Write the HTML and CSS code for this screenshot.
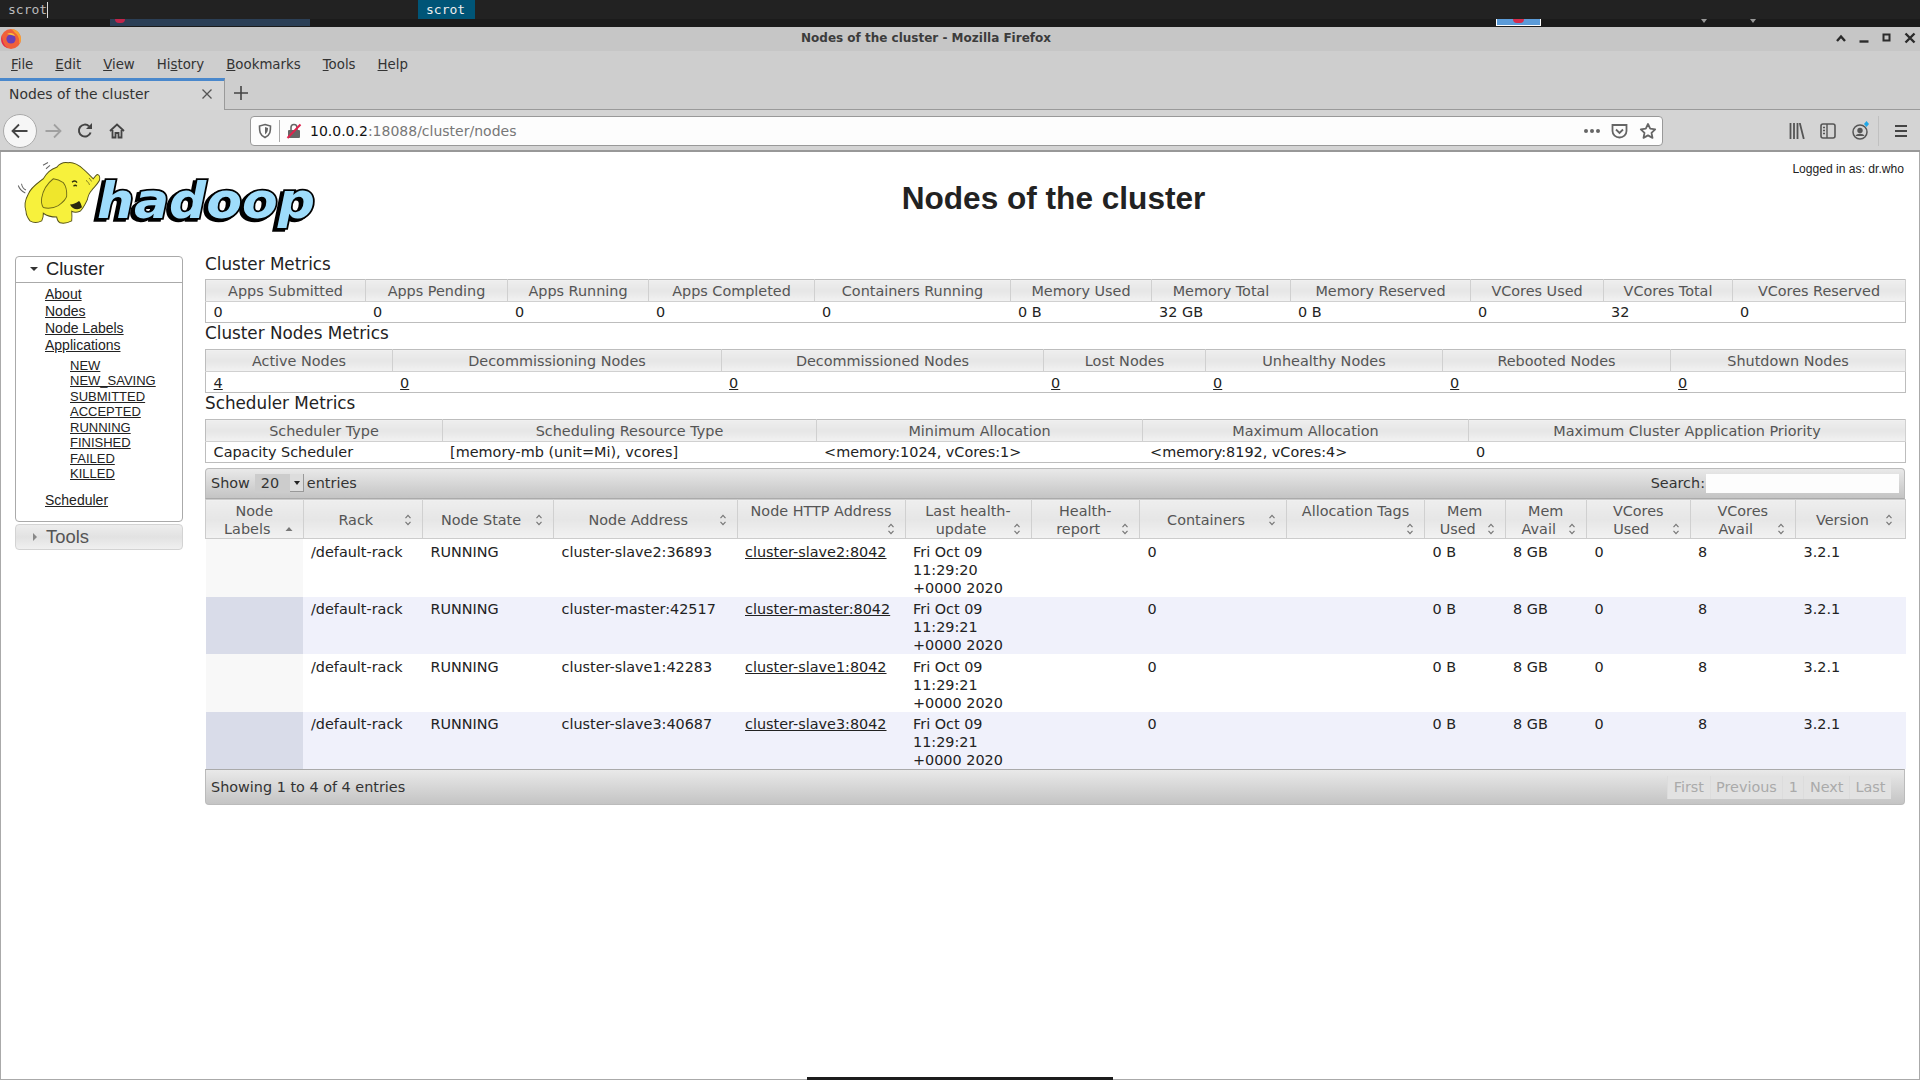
FILE: index.html
```html
<!DOCTYPE html>
<html lang="en">
<head>
<meta charset="utf-8">
<title>Nodes of the cluster</title>
<link rel="stylesheet" href="styles.css">
</head>
<body>
<svg class="defs" width="0" height="0" aria-hidden="true">
  <defs>
    <g id="sort"><path d="M1.5 4.2 4 1.4 6.5 4.2M1.5 7.8 4 10.6 6.5 7.8" fill="none" stroke="#777" stroke-width="1.2"/></g>
  </defs>
</svg>
<div class="screen">
  <div class="launcher">
    <span class="prompt">scrot<i class="caret"></i></span>
    <span class="match">scrot</span>
  </div>
  <div class="strip">
    <span class="strip-task"><i class="strip-dot"></i></span>
    <span class="strip-thumb"><i class="strip-red"></i></span>
    <span class="strip-arrow a1"></span>
    <span class="strip-arrow a2"></span>
  </div>
  <div class="titlebar">
    <svg class="fxlogo" width="22" height="22" viewBox="0 0 22 22">
      <circle cx="11" cy="12" r="10" fill="#f0603a"/>
      <path d="M11 2c5 0 10 4 10 10 0 2-1 4-2 5 1-5-1-9-4-11-1-1-2-3-4-4z" fill="#f9a12e"/>
      <path d="M2 8c-2 5 0 12 6 13-4-2-6-7-6-13z" fill="#e0284f"/>
      <circle cx="11" cy="12" r="4.6" fill="#6a3fb5"/>
      <path d="M7 7c3-2 7-1 8 2-2-1-5-1-8-2z" fill="#f9c23c"/>
    </svg>
    <span class="wintitle">Nodes of the cluster - Mozilla Firefox</span>
    <div class="winbtns">
      <svg width="12" height="10" viewBox="0 0 12 10"><path d="M2 8 6 3.5 10 8" fill="none" stroke="#2b2b2b" stroke-width="2.4"/></svg>
      <svg width="12" height="10" viewBox="0 0 12 10"><path d="M1.5 8.5h9" stroke="#2b2b2b" stroke-width="2.4"/></svg>
      <svg width="12" height="10" viewBox="0 0 12 10"><rect x="2.5" y="1.5" width="6" height="6" fill="none" stroke="#2b2b2b" stroke-width="2"/></svg>
      <svg width="12" height="12" viewBox="0 0 12 12"><path d="M1.5 1.5 10.5 10.5M10.5 1.5 1.5 10.5" stroke="#2b2b2b" stroke-width="2.4"/></svg>
    </div>
  </div>
  <div class="menubar">
    <span class="menu"><u>F</u>ile</span>
    <span class="menu"><u>E</u>dit</span>
    <span class="menu"><u>V</u>iew</span>
    <span class="menu">Hi<u>s</u>tory</span>
    <span class="menu"><u>B</u>ookmarks</span>
    <span class="menu"><u>T</u>ools</span>
    <span class="menu"><u>H</u>elp</span>
  </div>
  <div class="tabbar">
    <div class="tab">
      <span class="tab-title">Nodes of the cluster</span>
      <svg width="12" height="12" viewBox="0 0 12 12"><path d="M1.5 1.5 10.5 10.5M10.5 1.5 1.5 10.5" stroke="#555" stroke-width="1.3"/></svg>
    </div>
    <svg class="newtab" width="14" height="14" viewBox="0 0 14 14"><path d="M7 0v14M0 7h14" stroke="#444" stroke-width="1.6"/></svg>
  </div>
  <div class="navbar">
    <span class="backbtn">
      <svg width="18" height="16" viewBox="0 0 18 16"><path d="M1.5 8h15M8 1.5 1.5 8 8 14.5" fill="none" stroke="#444" stroke-width="1.8"/></svg>
    </span>
    <svg class="nav-fwd" width="18" height="16" viewBox="0 0 18 16"><path d="M1.5 8h15M10 1.5 16.5 8 10 14.5" fill="none" stroke="#a0a0a0" stroke-width="1.8"/></svg>
    <svg class="nav-reload" width="16" height="16" viewBox="0 0 16 16"><path d="M13.6 9.5A6 6 0 1 1 12 3.2" fill="none" stroke="#444" stroke-width="2"/><path d="M9 6h6V0z" fill="#444"/></svg>
    <svg class="nav-home" width="16" height="16" viewBox="0 0 16 16"><path d="M1 8 8 1.5 15 8M3.5 7v7.5h3V10h3v4.500h3V7" fill="none" stroke="#444" stroke-width="1.8"/></svg>
    <div class="urlbar">
      <svg class="url-shield" width="14" height="16" viewBox="0 0 14 16"><path d="M7 1.500 12.500 3c0 5 0 9-5.500 11.500C1.500 12 1.500 8 1.500 3z" fill="none" stroke="#666" stroke-width="1.600"/><path d="M7 4v7.500c2-1.500 3-3 3-6.500z" fill="#666"/></svg>
      <span class="url-sep"></span>
      <svg class="url-lock" width="16" height="16" viewBox="0 0 16 16"><rect x="2" y="7" width="12" height="8" rx="1" fill="#666"/><path d="M5 7V4.500a3 3 0 0 1 6 0V7" fill="none" stroke="#666" stroke-width="1.600"/><path d="M1.500 15 14.500 1.500" stroke="#e0234e" stroke-width="2"/></svg>
      <span class="url-text"><b>10.0.0.2</b>:18088/cluster/nodes</span>
      <span class="url-dots"><i></i><i></i><i></i></span>
      <svg class="url-pocket" width="17" height="16" viewBox="0 0 17 16"><path d="M1.500 2h14v6a7 6.500 0 0 1-14 0z" fill="none" stroke="#666" stroke-width="1.800"/><path d="M5 6.500 8.500 10 12 6.500" fill="none" stroke="#666" stroke-width="1.800"/></svg>
      <svg class="url-star" width="18" height="18" viewBox="0 0 18 18"><path d="M9 2l2.200 4.700 5 .6-3.700 3.500 1 5.100L9 13.400l-4.500 2.500 1-5.100L1.800 7.300l5-.6z" fill="none" stroke="#666" stroke-width="1.800" stroke-linejoin="round"/></svg>
    </div>
    <svg class="tool-lib" width="16" height="16" viewBox="0 0 16 16"><path d="M1.500 0v16M5 0v16M8.500 0v16M10.800 0l4 16" fill="none" stroke="#555" stroke-width="1.800"/></svg>
    <svg class="tool-side" width="16" height="16" viewBox="0 0 16 16"><rect x="1" y="1" width="14" height="14" rx="2" fill="none" stroke="#555" stroke-width="1.600"/><path d="M7 1v14M3 4.500h2M3 7.500h2M3 10.500h2" stroke="#555" stroke-width="1.400"/></svg>
    <svg class="tool-acct" width="20" height="20" viewBox="0 0 20 20"><circle cx="9" cy="11" r="7" fill="none" stroke="#555" stroke-width="1.500"/><circle cx="9" cy="9.500" r="2.700" fill="#555"/><path d="M4.500 15c1-3 8-3 9 0" fill="#555"/><path d="M15.500 0l2.500 3-2.500 3-2.500-3z" fill="#1ea7e8"/></svg>
    <span class="tool-sep"></span>
    <svg class="tool-menu" width="14" height="14" viewBox="0 0 14 14"><path d="M1 2h12M1 7h12M1 12h12" stroke="#444" stroke-width="1.800"/></svg>
  </div>

  <main class="page">
    <header class="pagehead">
      <svg class="logo" width="300" height="76" viewBox="0 0 300 76">
        <text class="logo-word" x="81" y="60" textLength="218" lengthAdjust="spacingAndGlyphs">hadoop</text>
        <g transform="translate(0 4.700) scale(1 1.150) translate(0 -4.700)">
          <path d="M12.300 32C15 26 21 23 27.300 18.700 31 13 36 10 40.700 8.700 44 5 48 4 52.300 4.700 58 4 63 7 67.300 10.300 71 13 74 16 77.300 18.700 79 17 81 14 82.300 15.300 84 16 84 19 83.300 20.300 81 24 78 26 75.700 28.700 73 31 72 34 71.300 37 69 41 67 45 64 47 61 48 58 48 55.700 47 56 50 56 53 55.700 55.300 52 57 48 58 44 57 42 56 41 54 40.700 52 36 52 31 51 27.300 48.700 27.500 51 27 53 25.700 55.300 22 57 17 57 14 55.300 11 52 10 50 10 47 8 42 9 37 12.300 32z" fill="#f7f13c" stroke="#55521a" stroke-width="0.900"/>
          <path d="M37.300 18.700C31 23 27 29 25.700 35.300 25 39 26 42 27.300 43.700 32 45 38 44 42.300 42 47 39 50 37 50.700 33.700 51 29 50 25 47.300 22 44 20 41 19 37.300 18.700z" fill="#efe62c" stroke="#6e6a18" stroke-width="0.900"/>
          <path d="M56 21.500c2-1.200 4-1 5 .5M57.500 25c1.200-.8 2.500-.8 3.200.2" fill="none" stroke="#33320c" stroke-width="1.300"/>
          <path d="M54 41c2 4 8 5.500 12 2.500-1-3-2-5-3-5.500-3 2-6 3-9 3z" fill="#2a2810"/>
          <path d="M70 20c1.500 1 3 2.500 3.500 4M73 18c1 1 2 2 2.500 3" fill="none" stroke="#6e6a18" stroke-width="0.800"/>
          <path d="M2.300 24.500c1 3 3.500 5 7 6.500M5.500 23c.5 2.500 2 4.500 4.500 5.500M27 7l5-2.500M30 10l4-3" fill="none" stroke="#666" stroke-width="1"/>
        </g>
      </svg>
      <h1 class="pagetitle">Nodes of the cluster</h1>
      <div class="logged">Logged in as: dr.who</div>
    </header>
    <div class="columns">
      <aside class="side">
        <div class="panel">
          <h4 class="panel-head"><i class="tri-down"></i>Cluster</h4>
          <div class="panel-body">
            <ul class="links">
              <li><a href="#">About</a></li>
              <li><a href="#">Nodes</a></li>
              <li><a href="#">Node Labels</a></li>
              <li><a href="#">Applications</a>
                <ul class="sublinks">
                  <li><a href="#">NEW</a></li>
                  <li><a href="#">NEW_SAVING</a></li>
                  <li><a href="#">SUBMITTED</a></li>
                  <li><a href="#">ACCEPTED</a></li>
                  <li><a href="#">RUNNING</a></li>
                  <li><a href="#">FINISHED</a></li>
                  <li><a href="#">FAILED</a></li>
                  <li><a href="#">KILLED</a></li>
                </ul>
              </li>
              <li class="after-sub"><a href="#">Scheduler</a></li>
            </ul>
          </div>
        </div>
        <h4 class="panel-closed"><i class="tri-right"></i>Tools</h4>
      </aside>
      <section class="content">
        <h3 class="mhead">Cluster Metrics</h3>
        <table class="metrics m1">
          <colgroup><col class="c1"><col class="c2"><col class="c3"><col class="c4"><col class="c5"><col class="c6"><col class="c7"><col class="c8"><col class="c9"><col class="c10"><col class="c11"></colgroup>
          <thead><tr><th>Apps Submitted</th><th>Apps Pending</th><th>Apps Running</th><th>Apps Completed</th><th>Containers Running</th><th>Memory Used</th><th>Memory Total</th><th>Memory Reserved</th><th>VCores Used</th><th>VCores Total</th><th>VCores Reserved</th></tr></thead>
          <tbody><tr><td>0</td><td>0</td><td>0</td><td>0</td><td>0</td><td>0 B</td><td>32 GB</td><td>0 B</td><td>0</td><td>32</td><td>0</td></tr></tbody>
        </table>
        <h3 class="mhead">Cluster Nodes Metrics</h3>
        <table class="metrics m2">
          <colgroup><col class="c1"><col class="c2"><col class="c3"><col class="c4"><col class="c5"><col class="c6"><col class="c7"></colgroup>
          <thead><tr><th>Active Nodes</th><th>Decommissioning Nodes</th><th>Decommissioned Nodes</th><th>Lost Nodes</th><th>Unhealthy Nodes</th><th>Rebooted Nodes</th><th>Shutdown Nodes</th></tr></thead>
          <tbody><tr><td><a href="#">4</a></td><td><a href="#">0</a></td><td><a href="#">0</a></td><td><a href="#">0</a></td><td><a href="#">0</a></td><td><a href="#">0</a></td><td><a href="#">0</a></td></tr></tbody>
        </table>
        <h3 class="mhead">Scheduler Metrics</h3>
        <table class="metrics m3">
          <colgroup><col class="c1"><col class="c2"><col class="c3"><col class="c4"><col class="c5"></colgroup>
          <thead><tr><th>Scheduler Type</th><th>Scheduling Resource Type</th><th>Minimum Allocation</th><th>Maximum Allocation</th><th>Maximum Cluster Application Priority</th></tr></thead>
          <tbody><tr><td>Capacity Scheduler</td><td>[memory-mb (unit=Mi), vcores]</td><td>&lt;memory:1024, vCores:1&gt;</td><td>&lt;memory:8192, vCores:4&gt;</td><td>0</td></tr></tbody>
        </table>

        <div class="toolbar">
          <label class="lenlabel">Show <span class="select"><span class="select-val">20</span><span class="select-btn"></span></span> entries</label>
          <label class="search">Search:<input class="search-input" type="text"></label>
        </div>
        <table class="nodes">
          <colgroup><col class="n1"><col class="n2"><col class="n3"><col class="n4"><col class="n5"><col class="n6"><col class="n7"><col class="n8"><col class="n9"><col class="n10"><col class="n11"><col class="n12"><col class="n13"><col class="n14"></colgroup>
          <thead>
            <tr>
              <th>Node Labels <span class="s up"><svg width="8" height="12" viewBox="0 0 8 12"><path d="M0.500 8 4 4 7.500 8z" fill="#777"/></svg></span></th>
              <th>Rack <span class="s"><svg width="8" height="12"><use href="#sort"/></svg></span></th>
              <th>Node State <span class="s"><svg width="8" height="12"><use href="#sort"/></svg></span></th>
              <th>Node Address <span class="s"><svg width="8" height="12"><use href="#sort"/></svg></span></th>
              <th>Node HTTP Address <span class="s"><svg width="8" height="12"><use href="#sort"/></svg></span></th>
              <th>Last health-update <span class="s"><svg width="8" height="12"><use href="#sort"/></svg></span></th>
              <th>Health-report <span class="s"><svg width="8" height="12"><use href="#sort"/></svg></span></th>
              <th>Containers <span class="s"><svg width="8" height="12"><use href="#sort"/></svg></span></th>
              <th>Allocation Tags <span class="s"><svg width="8" height="12"><use href="#sort"/></svg></span></th>
              <th>Mem Used <span class="s"><svg width="8" height="12"><use href="#sort"/></svg></span></th>
              <th>Mem Avail <span class="s"><svg width="8" height="12"><use href="#sort"/></svg></span></th>
              <th>VCores Used <span class="s"><svg width="8" height="12"><use href="#sort"/></svg></span></th>
              <th>VCores<br>Avail <span class="s"><svg width="8" height="12"><use href="#sort"/></svg></span></th>
              <th>Version <span class="s"><svg width="8" height="12"><use href="#sort"/></svg></span></th>
            </tr>
          </thead>
          <tbody>
            <tr><td></td><td>/default-rack</td><td>RUNNING</td><td>cluster-slave2:36893</td><td><a href="#">cluster-slave2:8042</a></td><td>Fri Oct 09 11:29:20 +0000 2020</td><td></td><td>0</td><td></td><td>0 B</td><td>8 GB</td><td>0</td><td>8</td><td>3.2.1</td></tr>
            <tr><td></td><td>/default-rack</td><td>RUNNING</td><td>cluster-master:42517</td><td><a href="#">cluster-master:8042</a></td><td>Fri Oct 09 11:29:21 +0000 2020</td><td></td><td>0</td><td></td><td>0 B</td><td>8 GB</td><td>0</td><td>8</td><td>3.2.1</td></tr>
            <tr><td></td><td>/default-rack</td><td>RUNNING</td><td>cluster-slave1:42283</td><td><a href="#">cluster-slave1:8042</a></td><td>Fri Oct 09 11:29:21 +0000 2020</td><td></td><td>0</td><td></td><td>0 B</td><td>8 GB</td><td>0</td><td>8</td><td>3.2.1</td></tr>
            <tr><td></td><td>/default-rack</td><td>RUNNING</td><td>cluster-slave3:40687</td><td><a href="#">cluster-slave3:8042</a></td><td>Fri Oct 09 11:29:21 +0000 2020</td><td></td><td>0</td><td></td><td>0 B</td><td>8 GB</td><td>0</td><td>8</td><td>3.2.1</td></tr>
          </tbody>
        </table>
        <div class="tablefoot">
          <span class="info">Showing 1 to 4 of 4 entries</span>
          <span class="pager"><span>First</span><span>Previous</span><span>1</span><span>Next</span><span>Last</span></span>
        </div>
      </section>
    </div>
    <span class="dockbar"></span>
  </main>
</div>
</body>
</html>
```
FILE: styles.css
```css
* { box-sizing: border-box; }
html, body { margin: 0; padding: 0; background: #fff; }
body { width: 1920px; height: 1080px; overflow: hidden; font-family: "DejaVu Sans", sans-serif; }
.defs { position: absolute; }
.screen { width: 1920px; height: 1080px; display: flex; flex-direction: column; }

/* launcher + strip */
.launcher { height: 19px; background: #222; display: flex; align-items: center; font-family: "DejaVu Sans Mono", monospace; font-size: 13px; color: #bbb; }
.prompt { width: 418px; padding-left: 8px; display: flex; align-items: center; height: 19px; }
.caret { display: inline-block; width: 1px; height: 16px; background: #ddd; margin-left: 0; }
.match { height: 19px; line-height: 19px; padding: 0 8px; width: 57px; background: #005577; color: #eee; }
.strip { height: 8px; background: #1b1b1b; position: relative; }
.strip-task { position: absolute; left: 110px; top: 0; width: 200px; height: 7px; background: #2b3f56; }
.strip-dot { position: absolute; left: 5px; top: 0; width: 10px; height: 4px; border-radius: 0 0 5px 5px; background: #c0244a; }
.strip-thumb { position: absolute; left: 1496px; top: 0; width: 45px; height: 7px; background: #5b9bd8; border: 1px solid #fff; border-top: 0; }
.strip-red { position: absolute; left: 16px; top: 0; width: 11px; height: 4px; border-radius: 0 0 6px 6px; background: #d62a4a; }
.strip-arrow { position: absolute; top: 0; width: 0; height: 0; border: 3px solid transparent; border-top: 4px solid #999; }
.a1 { left: 1701px; }
.a2 { left: 1750px; }

/* window chrome */
.titlebar { height: 24px; background: #c6c6c6; display: flex; align-items: center; position: relative; }
.fxlogo { position: absolute; left: 0; top: 0; }
.wintitle { flex: 1; text-align: center; font-size: 12px; font-weight: 700; color: #3c3c3c; padding: 0 68px 2px 0; }
.winbtns { position: absolute; right: 4px; top: 5px; display: flex; gap: 11px; align-items: center; }
.menubar { height: 27px; background: #cecece; display: flex; align-items: center; padding-left: 0; font-size: 13.33px; color: #333; }
.menu { padding: 0 11px; }
.tabbar { height: 32px; background: #cecece; border-bottom: 1px solid #9a9a9a; display: flex; align-items: center; }
.tab { width: 225px; height: 32px; background: #d6d6d6; border-top: 3px solid #4a88cc; border-right: 1px solid #9a9a9a; padding: 0 11px 2px 9px; display: flex; align-items: center; justify-content: space-between; font-size: 13.9px; color: #333; }
.newtab { margin: 0 0 1px 9px; }
.navbar { height: 42px; padding-top: 2px; background: #d4d4d4; border-bottom: 2px solid #989898; position: relative; display: flex; align-items: center; }
.backbtn { width: 34px; height: 34px; margin-left: 3px; border-radius: 50%; background: #f6f6f6; border: 1px solid #aaa; display: flex; align-items: center; justify-content: center; }
.nav-fwd { margin-left: 7px; }
.nav-reload { margin-left: 15px; }
.nav-home { margin-left: 16px; }
.urlbar { width: 1413px; height: 30px; margin-left: 125px; background: #fdfdfd; border: 1px solid #999; border-radius: 4px; display: flex; align-items: center; font-size: 14px; color: #777; }
.url-shield { margin-left: 7px; }
.url-sep { width: 1px; height: 22px; background: #aaa; margin-left: 7px; }
.url-lock { margin-left: 6px; }
.url-text { margin-left: 8px; flex: 1; }
.url-text b { font-weight: 400; color: #111; }
.url-dots { display: flex; gap: 2px; margin-right: 11px; }
.url-dots i { width: 4px; height: 4px; border-radius: 50%; background: #666; }
.url-pocket { margin-right: 11px; }
.url-star { margin-right: 5px; }
.tool-lib { margin-left: 126px; }
.tool-side { margin-left: 15px; }
.tool-acct { margin-left: 15px; }
.tool-sep { width: 1px; height: 30px; background: #c0c0c0; margin-left: 7px; }
.tool-menu { margin-left: 15px; }

/* page */
.page { flex: 1; background: #fff; border: 1px solid #aaa; border-top: 0; position: relative; }
.dockbar { position: absolute; left: 806px; bottom: -1px; width: 306px; height: 3px; background: #1c1c1c; }
.pagehead { height: 101px; display: grid; grid-template-columns: 187px 1fr; }
.logo { grid-column: 1; grid-row: 1; margin: 6px 0 0 15px; overflow: visible; }
.logo-word { font-family: "DejaVu Sans", sans-serif; font-weight: 700; font-style: italic; font-size: 50px; fill: #9edcfb; stroke: #000; stroke-width: 3.5px; paint-order: stroke; filter: drop-shadow(-3px 2px 0 #000); }
.pagetitle { grid-column: 2; grid-row: 1; margin: 24px 0 0; font-family: "Liberation Sans", Arial, sans-serif; font-size: 31.6px; line-height: 44px; height: 44px; font-weight: 700; text-align: center; color: #222; }
.logged { grid-column: 2; grid-row: 1; justify-self: end; align-self: start; margin: 10px 15px 0 0; font-family: "Liberation Sans", Arial, sans-serif; font-size: 12.1px; line-height: 15px; color: #222; }
.columns { display: flex; align-items: flex-start; padding: 0 14px 0 14px; }

/* sidebar */
.side { width: 168px; margin-top: 3px; font-family: "Liberation Sans", Arial, sans-serif; }
.panel { border: 1px solid #aaa; border-radius: 4px; height: 266px; }
.panel-head { margin: 0; height: 26px; border-bottom: 1px solid #aaa; font-size: 18.4px; line-height: 25px; font-weight: 400; color: #222; padding: 0 0 2px 14px; display: flex; align-items: center; }
.panel-closed { margin: 2px 0 0; height: 26px; border: 1px solid #d3d3d3; border-radius: 4px; background: linear-gradient(#ededed, #e2e2e2 50%, #f0f0f0); font-size: 18.4px; font-weight: 400; color: #555; padding-left: 17px; display: flex; align-items: center; }
.tri-down { width: 0; height: 0; border: 4px solid transparent; border-top: 4px solid #333; border-bottom: 0; margin-right: 8px; }
.tri-right { width: 0; height: 0; border: 4px solid transparent; border-left: 4px solid #888; border-right: 0; margin-right: 9px; }
.panel-body { padding-top: 3px; }
.links, .sublinks { list-style: none; margin: 0; padding: 0; }
.links { padding-left: 29px; font-size: 14px; line-height: 17px; }
.sublinks { padding: 4px 0 10px 25px; font-size: 13px; line-height: 15.45px; }
.panel a { color: #222; text-decoration: underline; }

/* content */
.content { width: 1700px; margin-left: 22px; color: #222; }
.mhead { margin: 0; height: 26px; font-size: 16.800px; line-height: 22px; font-weight: 400; color: #222; }
.metrics + .mhead { line-height: 20px; }
.metrics { width: 1700px; height: 44px; table-layout: fixed; border-collapse: collapse; font-size: 14.4px; border: 1px solid #bdbdbd; }
.metrics th { height: 22px; padding: 0 7.600px; font-weight: 400; color: #555; text-align: center; white-space: nowrap; border-right: 1px solid #d0d0d0; border-bottom: 1px solid #d0d0d0; background: linear-gradient(#eee, #e6e6e6 50%, #f2f2f2); }
.metrics td { padding: 0 7.600px; line-height: 18px; height: 21px; vertical-align: middle; white-space: nowrap; background: #fff; }
.m2 td { padding-top: 2px; }
.metrics a, .nodes a { color: #222; text-decoration: underline; }
.m1 .c1 { width: 160px; } .m1 .c2 { width: 142px; } .m1 .c3 { width: 141px; } .m1 .c4 { width: 166px; } .m1 .c5 { width: 196px; } .m1 .c6 { width: 141px; } .m1 .c7 { width: 139px; } .m1 .c8 { width: 180px; } .m1 .c9 { width: 133px; } .m1 .c10 { width: 129px; } .m1 .c11 { width: 173px; }
.m2 .c1 { width: 187px; } .m2 .c2 { width: 329px; } .m2 .c3 { width: 322px; } .m2 .c4 { width: 162px; } .m2 .c5 { width: 237px; } .m2 .c6 { width: 228px; } .m2 .c7 { width: 235px; }
.m3 .c1 { width: 237px; } .m3 .c2 { width: 374px; } .m3 .c3 { width: 326px; } .m3 .c4 { width: 326px; } .m3 .c5 { width: 437px; }

.toolbar { margin-top: 5px; height: 31px; border: 1px solid #bbb; border-bottom: 1px solid #aaa; border-radius: 4px 4px 0 0; background: linear-gradient(#e9e9e9, #c4c4c4); display: flex; align-items: center; justify-content: space-between; padding: 0 5px 1px 5px; font-size: 14.4px; color: #333; }
.lenlabel { display: flex; align-items: center; }
.select { display: inline-flex; align-items: center; width: 49px; height: 19px; margin: 0 3px 0 5px; background: #ccc; }
.select-val { flex: 1; padding-left: 6px; }
.select-btn { width: 14px; height: 18px; background: #ddd; border-bottom: 1px solid #999; border-right: 1px solid #999; position: relative; }
.select-btn::after { content: ""; position: absolute; left: 4px; top: 7px; border: 3px solid transparent; border-top: 4px solid #222; border-bottom: 0; }
.search { display: flex; align-items: center; }
.search-input { width: 193px; height: 19px; margin: 0 0 0 1px; border: 0; padding: 0; background: #fdfdfd; }

.nodes { width: 1700px; table-layout: fixed; border-collapse: collapse; font-size: 14.4px; }
.nodes th { height: 39px; padding: 2px 8px 0; font-weight: 400; line-height: 18px; color: #555; text-align: center; vertical-align: middle; border-right: 1px solid #d0d0d0; border-top: 1px solid #ccc; border-bottom: 1px solid #ccc; background: linear-gradient(#eee, #e6e6e6 50%, #f2f2f2); }
.nodes th:first-child { border-left: 1px solid #ccc; }
.nodes th:last-child { border-right: 1px solid #ccc; padding-right: 10px; }
.s { float: right; width: 16px; height: 18px; margin-right: -2px; display: flex; align-items: center; justify-content: center; }
.nodes td { height: 57px; padding: 3.500px 8px 0; line-height: 18px; vertical-align: top; color: #222; background: #fff; }
.nodes td:first-child { background: #f8f8f8; }
.nodes tbody tr:nth-child(even) td { background: #f0f1fb; }
.nodes tbody tr:nth-child(even) td:first-child { background: #d9dce9; }
.n1 { width: 97.500px; } .n2 { width: 119.500px; } .n3 { width: 131px; } .n4 { width: 183.500px; } .n5 { width: 168px; } .n6 { width: 126px; } .n7 { width: 108.500px; } .n8 { width: 147px; } .n9 { width: 138px; } .n10 { width: 80.500px; } .n11 { width: 81.500px; } .n12 { width: 103.500px; } .n13 { width: 105.500px; } .n14 { width: 110px; }

.tablefoot { height: 36px; border: 1px solid #bbb; border-top: 1px solid #aaa; border-radius: 0 0 4px 4px; background: linear-gradient(#e9e9e9, #c4c4c4); display: flex; align-items: center; justify-content: space-between; padding: 0 13px 0 5px; font-size: 14.4px; color: #333; }
.pager { display: flex; height: 23px; background: #e2e2e2; color: #aaa; line-height: 23px; }
.pager span { padding: 0 5.500px; border-left: 1px solid #dcdcdc; }
```
